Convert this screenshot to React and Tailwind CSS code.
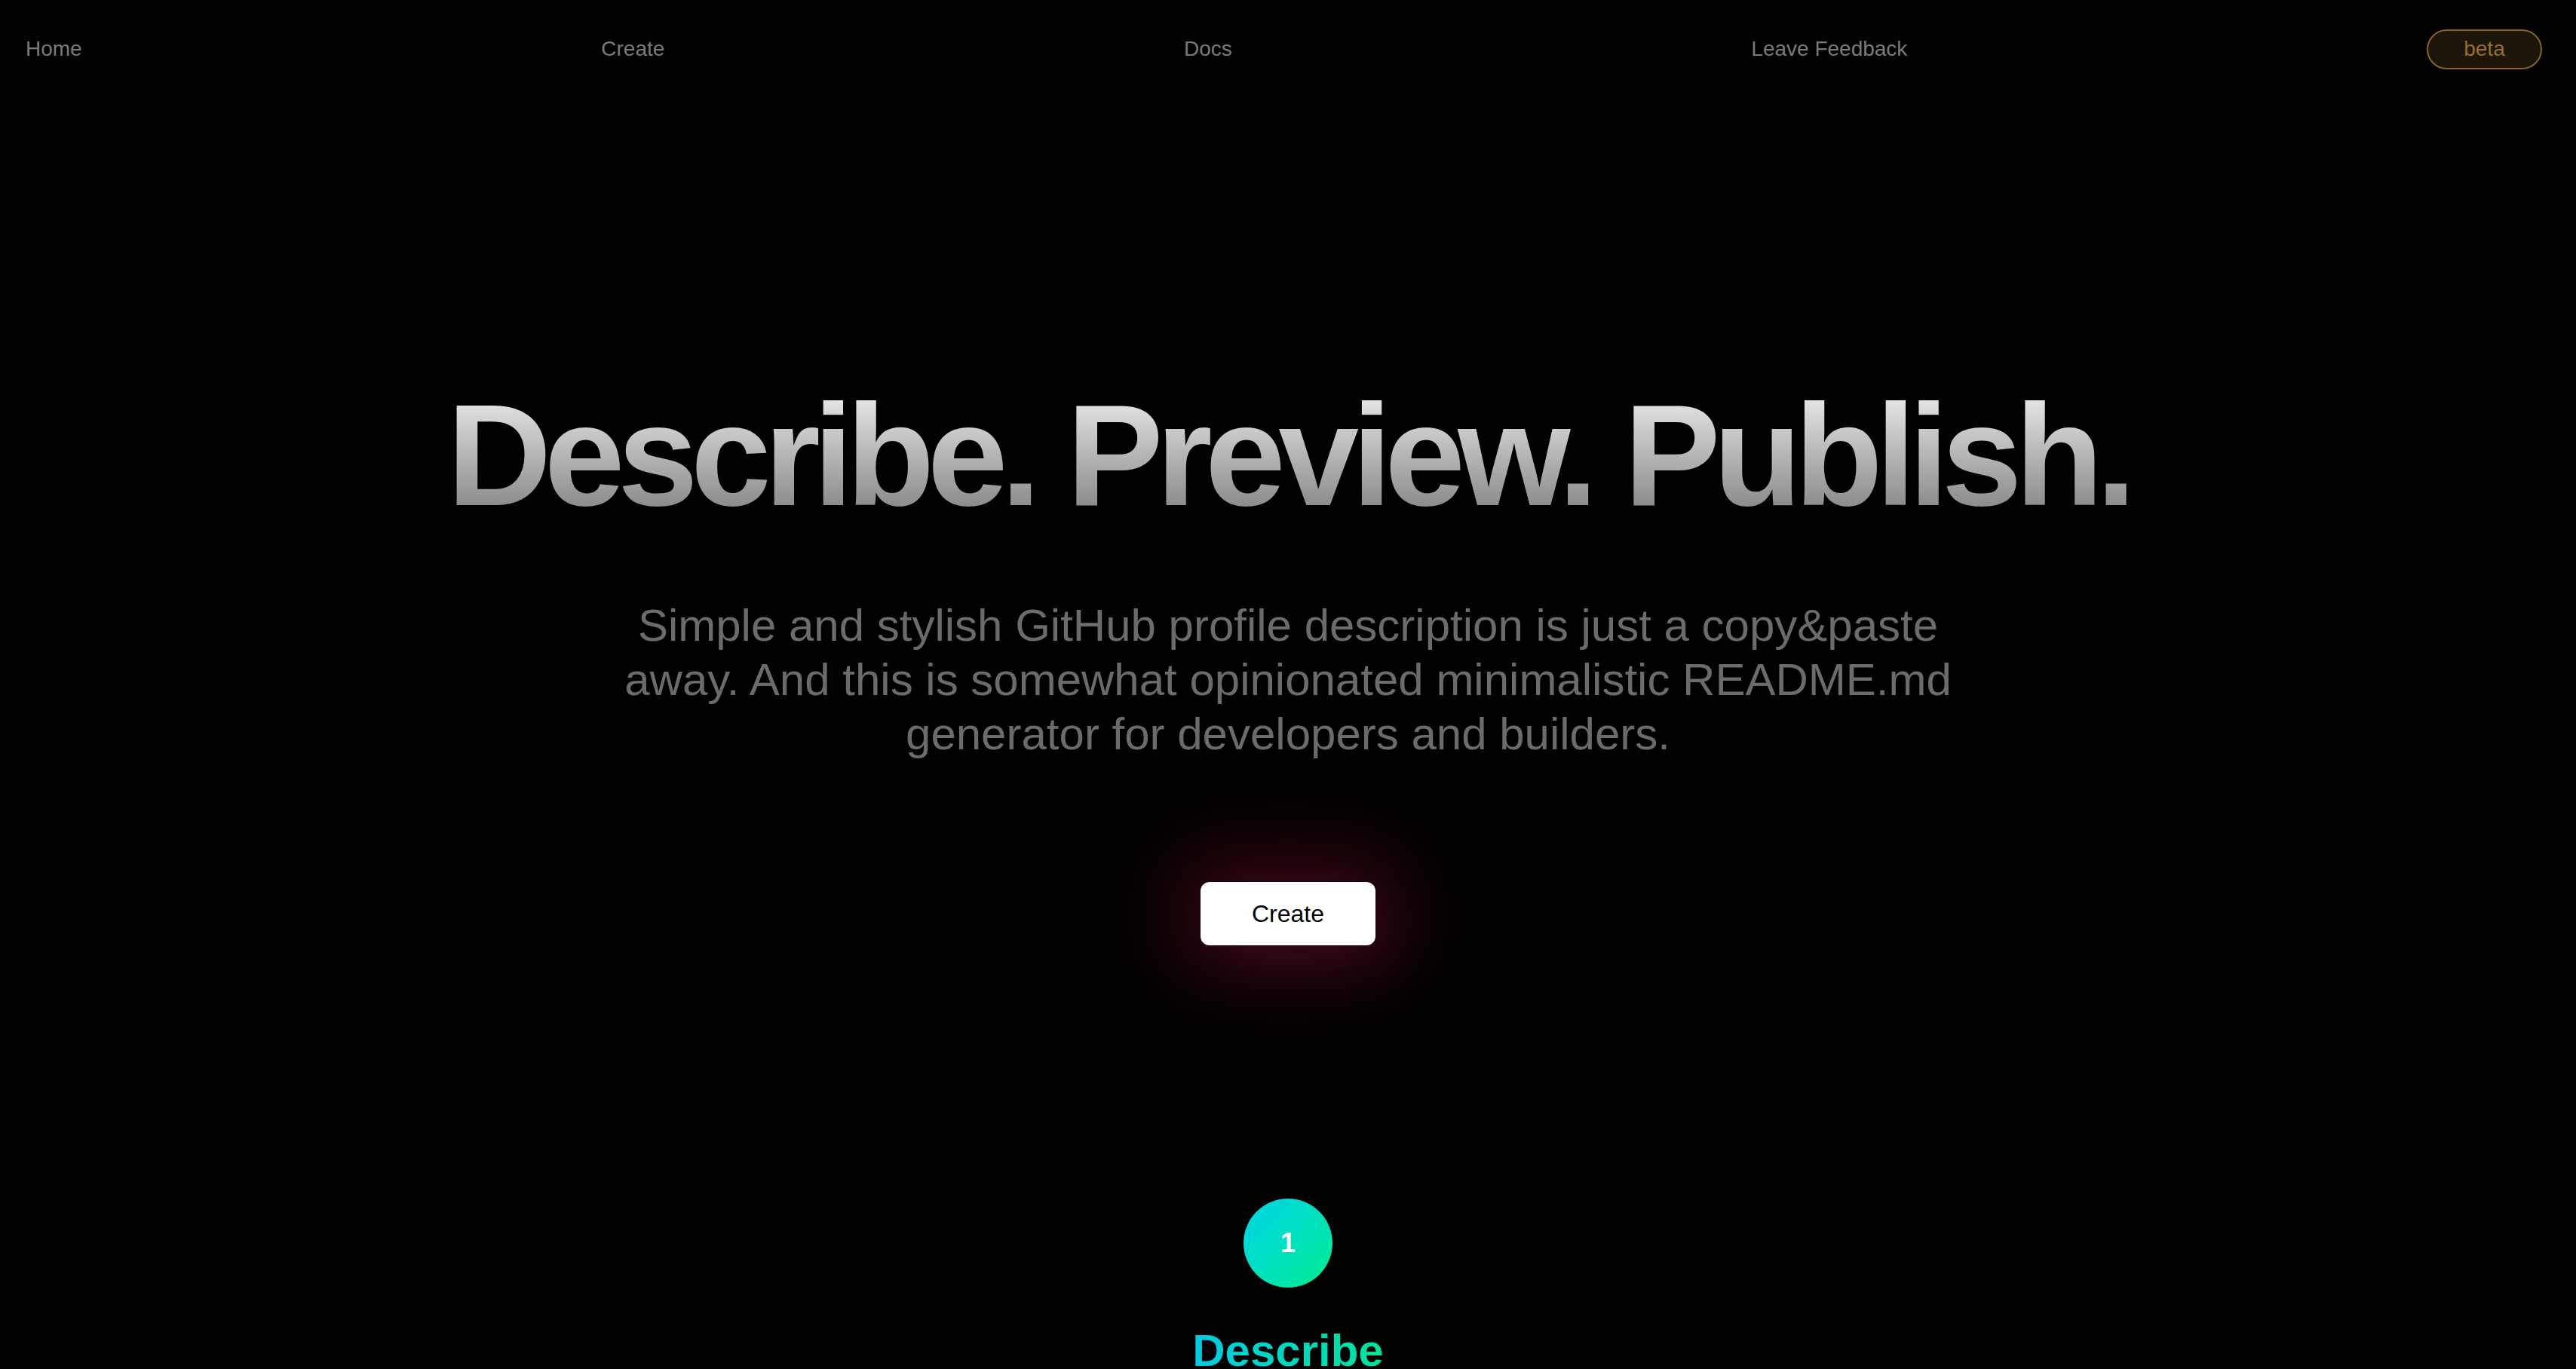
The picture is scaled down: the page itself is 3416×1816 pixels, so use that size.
import React from 'react';

const navLinks = ['Home', 'Create', 'Docs', 'Leave Feedback'];

const App = () => {
  return (
    <div
      className="min-h-screen w-full overflow-hidden bg-black"
      style={{ fontFamily: '"Liberation Sans", Arial, sans-serif' }}
    >
      {/* Nav */}
      <nav className="flex h-[130px] items-center justify-between pl-[34px] pr-[45px]">
        {navLinks.map((link) => (
          <a key={link} href="#" className="text-[28px] text-[#7a7a7a] hover:text-white">
            {link}
          </a>
        ))}
        <span className="flex h-[53px] w-[153px] items-center justify-center rounded-full border-2 border-[#8a6420] bg-[#1b150a] text-[28px] text-[#9a6e24]">
          beta
        </span>
      </nav>

      {/* Hero */}
      <main className="flex flex-col items-center">
        <h1 className="mt-[378px] bg-gradient-to-b from-[#f2f2f2] to-[#7c7c7c] bg-clip-text text-[192px] font-bold leading-none tracking-tighter text-transparent">
          Describe. Preview. Publish.
        </h1>

        <p className="mt-[94px] max-w-[1800px] text-center text-[60px] leading-[72px] text-[#6b6b6b]">
          Simple and stylish GitHub profile description is just a copy&amp;paste away. And this is
          somewhat opinionated minimalistic README.md generator for developers and builders.
        </p>

        <button className="mt-[160px] flex h-[84px] w-[232px] items-center justify-center rounded-xl bg-white text-[32px] text-black shadow-[0_0_110px_28px_rgba(150,22,48,0.42),24px_24px_90px_rgba(80,25,110,0.2)]">
          Create
        </button>

        {/* Steps */}
        <div className="mt-[336px] flex h-[118px] w-[118px] items-center justify-center rounded-full bg-gradient-to-br from-[#00d3ea] to-[#00ec8c] text-[36px] font-bold text-white">
          1
        </div>
        <h2 className="mt-[54px] bg-gradient-to-r from-[#00c9e2] to-[#00e39a] bg-clip-text text-[60px] font-bold leading-none text-transparent">
          Describe
        </h2>
      </main>
    </div>
  );
};

export default App;
